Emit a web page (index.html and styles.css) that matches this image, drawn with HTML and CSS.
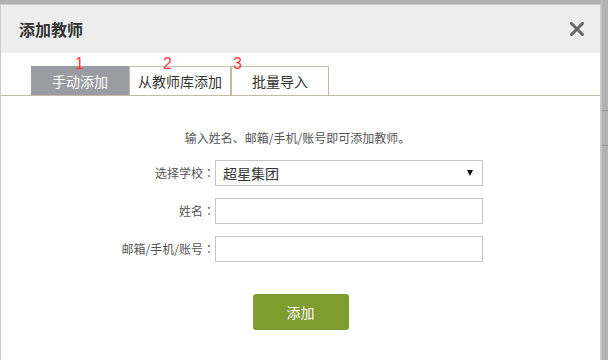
FILE: index.html
```html
<!DOCTYPE html>
<html lang="zh-CN">
<head>
    <meta charset="UTF-8">
    <meta name="viewport" content="width=device-width, initial-scale=1.0">
    <title>添加教师</title>
    <link rel="stylesheet" href="styles.css">
</head>
<body>
    <div class="page">
        <div class="dialog">
            <div class="dialog-header">
                <h2>添加教师</h2>
                <span class="close" title="关闭">
                    <svg width="14" height="14" viewBox="0 0 14 14">
                        <path d="M1.5 1.5 L12.5 12.5 M12.5 1.5 L1.5 12.5" stroke="#666" stroke-width="3" stroke-linecap="square"/>
                    </svg>
                </span>
            </div>

            <div class="tabs">
                <div class="tab active"><span class="mark mark-1">1</span>手动添加</div>
                <div class="tab"><span class="mark mark-2">2</span>从教师库添加</div>
                <div class="tab"><span class="mark mark-3">3</span>批量导入</div>
            </div>

            <div class="dialog-body">
                <p class="tip">输入姓名、邮箱/手机/账号即可添加教师。</p>
                <div class="form">
                    <label for="school">选择学校<span class="colon" lang="zh-TW">：</span></label>
                    <div class="select-wrap">
                        <select id="school">
                            <option>超星集团</option>
                        </select>
                    </div>

                    <label for="name">姓名<span class="colon" lang="zh-TW">：</span></label>
                    <input type="text" id="name">

                    <label for="account">邮箱/手机/账号<span class="colon" lang="zh-TW">：</span></label>
                    <input type="text" id="account">
                </div>
                <div class="actions">
                    <button class="btn-add">添加</button>
                </div>
            </div>
        </div>

        <div class="backdrop">
            <div class="line line-1"></div>
            <div class="line line-2"></div>
        </div>
    </div>
</body>
</html>
```

FILE: styles.css
```css
body {
    margin: 0;
    padding: 0;
    background-color: #b3b3b3;
    font-family: "Microsoft YaHei", "Noto Sans CJK SC", sans-serif;
    color: #333333;
    overflow: hidden;
}
.page {
    display: flex;
    height: 360px;
}
.dialog {
    width: 599px;
    margin-top: 4px;
    background: #ffffff;
    border: 1px solid #cacaca;
    border-bottom: none;
}
.dialog-header {
    height: 48px;
    background-color: #eeeeee;
    display: flex;
    align-items: center;
    justify-content: space-between;
    padding: 0 16px 0 18px;
}
.dialog-header h2 {
    margin: 0;
    font-size: 16px;
    font-weight: bold;
    line-height: 20px;
    color: #333333;
}
.close {
    display: flex;
    cursor: pointer;
}
.tabs {
    display: flex;
    padding: 13px 0 0 30px;
    border-bottom: 1px solid #c2baa9;
}
.tab {
    position: relative;
    box-sizing: border-box;
    height: 29px;
    min-width: 98px;
    padding: 0 8px;
    border: 1px solid #c2baa9;
    border-bottom: none;
    font-size: 14px;
    line-height: 28px;
    text-align: center;
    color: #333333;
    background: #ffffff;
}
.tab.active {
    background-color: #9a9ba3;
    border-color: #9a9ba3;
    color: #ffffff;
}
.mark {
    position: absolute;
    top: -11px;
    font-family: "Liberation Sans", sans-serif;
    font-size: 16px;
    line-height: 16px;
    color: #ff3b3b;
}
.mark-1 { left: 43px; }
.mark-2 { left: 33px; }
.mark-3 { left: 1px; }
.dialog-body {
    padding-top: 33px;
}
.tip {
    margin: 0 0 0 -6px;
    font-size: 12px;
    line-height: 18px;
    color: #555555;
    text-align: center;
}
.form {
    display: grid;
    grid-template-columns: 214px 268px;
    row-gap: 12px;
    margin-top: 13px;
}
.form label {
    font-size: 12px;
    line-height: 26px;
    color: #555555;
    text-align: right;
}
.colon {
    font-family: "Noto Sans CJK TC", sans-serif;
}
.form input,
.select-wrap select {
    box-sizing: border-box;
    width: 268px;
    height: 26px;
    margin: 0;
    border: 1px solid #c4c4c4;
    border-radius: 0;
    background: #ffffff;
    font-family: inherit;
    font-size: 14px;
    color: #333333;
    padding: 0 7px;
    outline: none;
}
.select-wrap {
    position: relative;
}
.select-wrap select {
    -webkit-appearance: none;
    appearance: none;
    line-height: 24px;
}
.select-wrap::after {
    content: "";
    position: absolute;
    right: 10px;
    top: 10px;
    border-left: 3px solid transparent;
    border-right: 3px solid transparent;
    border-top: 6px solid #111111;
}
.actions {
    display: flex;
    justify-content: center;
    margin-top: 32px;
}
.btn-add {
    width: 96px;
    height: 36px;
    border: none;
    border-radius: 3px;
    background-color: #7f9c30;
    color: #ffffff;
    font-family: inherit;
    font-size: 14px;
    cursor: pointer;
}
.btn-add:hover {
    background-color: #6f8a26;
}
.backdrop {
    flex: 1;
    border-left: 1px solid #c4c4c4;
}
.line {
    height: 1px;
    background-color: #999999;
}
.line-1 {
    margin-top: 110px;
}
.line-2 {
    margin-top: 34px;
}
```
